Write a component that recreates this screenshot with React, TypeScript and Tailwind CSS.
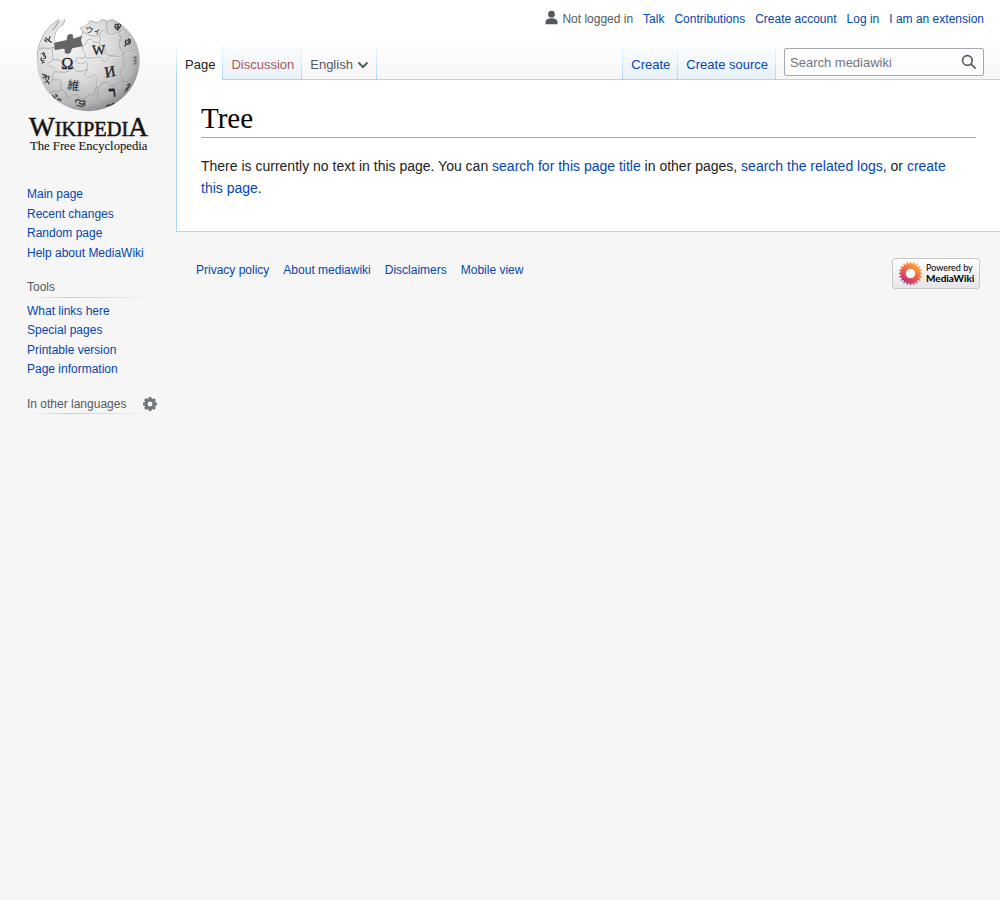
import type { ReactNode } from "react";

function Link({ children, className = "" }: { children: ReactNode; className?: string }) {
  return (
    <a href="#" className={`text-[#0645ad] hover:underline ${className}`}>
      {children}
    </a>
  );
}

function Logo() {
  return (
    <svg viewBox="0 0 408 450" className="block h-[150px] w-[136px]" role="img" aria-label="Wikipedia">
      <defs>
        <radialGradient id="globe" cx="0.36" cy="0.3" r="0.78">
          <stop offset="0" stopColor="#f4f4f4" />
          <stop offset="0.45" stopColor="#dcdcdd" />
          <stop offset="0.78" stopColor="#b4b4b6" />
          <stop offset="1" stopColor="#707073" />
        </radialGradient>
        <clipPath id="ball">
          <path d="M50 150C50 104 70 60 104 36L116 27L122 32L136 27L132 42L118 52L108 66L104 82L110 96L184 76L188 64L178 54L190 50L202 42L212 31L232 38L246 28L264 33L276 28L294 36C336 62 359 104 359 148A154 154 0 0 1 50 150Z" />
        </clipPath>
      </defs>
      <g clipPath="url(#ball)">
        <rect x="45" y="20" width="320" height="290" fill="url(#globe)" />
        <g fill="none" stroke="#fff" strokeOpacity="0.75" strokeWidth="3" transform="translate(2 2)">
          <path d="M188 108C202 108 196 90 208 88S216 103 236 97C248 93 238 82 240 72S256 58 262 68S282 74 300 64S320 84 332 78" />
          <path d="M100 112C92 130 104 136 98 150S84 152 84 164S100 166 104 178S96 196 98 208" />
          <path d="M188 110C184 126 202 132 194 142S172 136 168 148S186 166 194 158S206 170 202 180S190 196 202 202S218 190 226 198S232 218 230 232" />
          <path d="M194 142C210 150 228 140 240 142S248 160 258 156S264 136 280 138S306 142 312 132S332 124 346 132" />
        </g>
        <g fill="none" stroke="#98989a" strokeWidth="2" strokeLinecap="round">
          <path d="M188 108C202 108 196 90 208 88S216 103 236 97C248 93 238 82 240 72S256 58 262 68S282 74 300 64S320 84 332 78" />
          <path d="M184 62C198 70 204 76 220 78S236 74 240 72M262 68C266 54 254 48 260 34M300 64C294 76 308 82 300 92" />
          <path d="M58 116C72 110 86 120 100 112M100 112C92 130 104 136 98 150S84 152 84 164S100 166 104 178S96 196 98 208" />
          <path d="M98 150C112 146 120 150 126 156M104 186C118 184 132 190 144 184S138 166 152 168S160 184 174 184S194 182 202 180" />
          <path d="M188 110C184 126 202 132 194 142S172 136 168 148S186 166 194 158S206 170 202 180S190 196 202 202S218 190 226 198S232 218 230 232" />
          <path d="M194 142C210 150 228 140 240 142S248 160 258 156S264 136 280 138S306 142 312 132S332 124 346 132" />
          <path d="M236 97C242 112 258 108 256 122S268 136 280 138M300 92C292 108 306 118 312 132" />
          <path d="M230 232C248 236 240 216 256 216S264 230 282 226S298 208 310 214S326 206 342 200" />
          <path d="M312 132C302 150 316 154 312 168S296 180 302 194S308 204 310 214" />
          <path d="M66 222C80 214 96 224 98 208M98 208C110 214 116 204 122 214S116 236 126 240S142 252 140 264" />
          <path d="M140 264C154 268 154 250 168 254S176 272 190 266S206 248 216 256S222 240 230 232M190 266C196 280 188 286 192 300" />
          <path d="M126 240C112 248 98 240 86 250M230 232C240 248 228 262 238 272S258 270 264 280M282 226C278 242 292 250 288 264" />
        </g>
        <path
          d="M50 150C50 104 70 60 104 36L116 27M136 27L132 42L118 52L108 66L104 82M116 34L104 54L96 60M184 76L188 64L178 54L190 50L202 42L212 31L232 38L246 28L264 33L276 28L294 36"
          fill="none"
          stroke="#8f8f91"
          strokeWidth="3"
        />
        <g fill="none" stroke="#39393b" strokeWidth="3.6" strokeLinecap="round">
          <path d="M77 84l12 10M90 80l-4 12l8 5M80 95l-6-5" />
          <path d="M66 132c7-7 11 1 4 6c9-3 9 7 2 8M64 143c-4 8 2 11 6 8M73 156l-7 3" />
          <path d="M68 193l11 4M70 204c5-8 12-2 7 3M82 200c6-4 7 5 3 8M76 216l6-4l5 9" />
          <path d="M98 257l7 8M106 254c8 0 7 7 1 7M112 270l7-5M119 272l4-3" />
          <path d="M168 276c-5-7 6-9 12-4s15-4 15 4s-14 8-18 2M171 286c10 5 18 4 24-2" />
          <path d="M259 289l8-5l3 4l8-8M283 280l-4 5" />
          <path d="M287 43c-6 6 0 13 6 17c5-6 12-13 8-17c-4-3-7 0-8 4c-1-4-4-6-6-4zM287 51l14-1M293 44l1 16" />
          <path d="M317 91c-2 9 4 14 10 10s5-13 0-13s-4 8 2 8M316 105l-1 3" strokeWidth="4.5" />
          <path d="M340 143l9-2M340 153l10-4M342 163l8-6M347 140l-2 22" strokeOpacity="0.5" />
          <path d="M323 226c6-8 9-3 5 3M319 236l8-5M315 243l8-5" />
        </g>
        <g fill="#242426" className="font-['Liberation_Serif',serif]" textAnchor="middle">
          <text x="142" y="176" fontSize="49" stroke="#242426" strokeWidth="1">Ω</text>
          <text x="236" y="134" fontSize="42" transform="rotate(-4 236 120)" stroke="#242426">W</text>
          <text x="270" y="200" fontSize="45" transform="rotate(-10 270 186)" stroke="#242426">И</text>
          <text x="277" y="260" fontSize="42" fontWeight="700" transform="rotate(-5 277 247)" stroke="#242426" strokeWidth="2">ר</text>
        </g>
        <g fill="#242426" className="font-['Noto_Sans_CJK_JP',sans-serif]" textAnchor="middle">
          <text x="161" y="240" fontSize="37" transform="rotate(6 161 227)">維</text>
          <text x="220" y="70" fontSize="24" transform="rotate(8 220 61)">ウィ</text>
        </g>
      </g>
      <path
        d="M101 99L137 91C145 88 138 78 145 74C153 70 161 73 159 81C158 86 162 86 167 84L187 77L183 89L188 109L160 114C152 116 156 125 149 130C141 134 132 130 134 122C136 116 130 116 125 117L105 120C101 113 106 107 101 99Z"
        fill="#656568"
      />
      <g fill="#141414" stroke="#141414" className="font-['Liberation_Serif',serif]">
        <text x="27" y="378" fontSize="82" strokeWidth="1.5">
          W<tspan fontSize="61">IKIPEDI</tspan>A
        </text>
        <text x="30" y="420" fontSize="38" strokeWidth="0.3">The Free Encyclopedia</text>
      </g>
    </svg>
  );
}

const petals = Array.from({ length: 20 }, (_, i) => i * 18);

function MediaWikiBadge() {
  return (
    <a
      href="#"
      aria-label="Powered by MediaWiki"
      className="flex h-[31px] w-[88px] shrink-0 items-center gap-[3px] rounded-[3px] border border-[#c8c8c8] bg-linear-to-b from-white to-[#e6e6e6] pl-[5px] text-black"
    >
      <svg viewBox="-13 -13 26 26" className="size-[25px] shrink-0" aria-hidden="true">
        <defs>
          <linearGradient id="sun" gradientUnits="userSpaceOnUse" x1="8" y1="-10" x2="-6" y2="11">
            <stop offset="0" stopColor="#fcb040" />
            <stop offset="0.45" stopColor="#f36c45" />
            <stop offset="0.75" stopColor="#dc3f63" />
            <stop offset="1" stopColor="#84408f" />
          </linearGradient>
          <mask id="petals">
            {petals.map((angle) => (
              <path key={angle} d="M-1.2 -5L-1.9 -9L0 -12.8L1.9 -9L1.2 -5Z" fill="#fff" transform={`rotate(${angle})`} />
            ))}
            <circle r="7" fill="none" stroke="#fff" strokeWidth="3.6" />
          </mask>
        </defs>
        <circle r="7" fill="#fff" />
        <rect x="-13" y="-13" width="26" height="26" fill="url(#sun)" mask="url(#petals)" />
      </svg>
      <span className="font-['Lato',sans-serif] text-[9px] leading-[10px] whitespace-nowrap">
        Powered by
        <br />
        <b className="text-[10px] font-bold">MediaWiki</b>
      </span>
    </a>
  );
}

function TabEdge() {
  return <span className="w-px shrink-0 bg-linear-to-b from-white to-[#a7d7f9]" />;
}

function Tab({ children, tone }: { children: ReactNode; tone: string }) {
  return (
    <li className="flex">
      <a href="#" className={`flex items-center pt-[10px] pr-[7px] pl-2 whitespace-nowrap ${tone}`}>
        {children}
      </a>
      <TabEdge />
    </li>
  );
}

function Heading({ children, action }: { children: ReactNode; action?: ReactNode }) {
  return (
    <div className="mt-[15px] mb-1 flex items-center justify-between">
      <h3 className="font-normal text-[#54595d]">{children}</h3>
      {action}
    </div>
  );
}

function Rule() {
  return (
    <div className="-mt-[5px] mb-1 h-px bg-linear-to-r from-[#c8ccd1]/0 via-[#c8ccd1] via-33% to-[#c8ccd1]/0" />
  );
}

function NavList({ items }: { items: string[] }) {
  return (
    <ul>
      {items.map((item) => (
        <li key={item}>
          <Link>{item}</Link>
        </li>
      ))}
    </ul>
  );
}

export default function App() {
  return (
    <div className="flex min-h-screen bg-[#f6f6f6] bg-[linear-gradient(#fff_40px,#f6f6f6_80px)] font-['Liberation_Sans',sans-serif] text-[#202122]">
      <aside className="w-44 shrink-0 pt-[10px]">
        <a href="#" className="ml-5 block w-[136px]">
          <Logo />
        </a>
        <nav className="mt-[25px] pr-[19px] pl-[27px] text-xs leading-relaxed" aria-label="Site">
          <NavList items={["Main page", "Recent changes", "Random page", "Help about MediaWiki"]} />
          <Heading>Tools</Heading>
          <Rule />
          <NavList items={["What links here", "Special pages", "Printable version", "Page information"]} />
          <Heading
            action={
              <button type="button" aria-label="Language settings" className="text-[#72777d]">
                <svg viewBox="0 0 20 20" className="block size-[14px]" fill="currentColor">
                  <g transform="translate(10 10)">
                    {[0, 45, 90, 135].map((a) => (
                      <path key={a} transform={`rotate(${a})`} d="M-2-10h4l.8 4v12l-.8 4h-4l-.8-4v-3h0v-6z" clipPath="url(#gear-teeth)" />
                    ))}
                    <clipPath id="gear-teeth">
                      <path d="M-4-11h8v6h-8zM-4 5h8v6h-8z" />
                    </clipPath>
                  </g>
                  <path
                    fillRule="evenodd"
                    d="M10 2.200a7.800 7.800 0 0 0 0 15.600 7.800 7.800 0 0 0 0-15.600zM10 6.500a3.500 3.500 0 0 1 0 7 3.500 3.500 0 0 1 0-7z"
                  />
                </svg>
              </button>
            }
          >
            In other languages
          </Heading>
          <Rule />
        </nav>
      </aside>

      <div className="min-w-0 flex-1">
        <header>
          <nav aria-label="Personal tools" className="flex h-10 justify-end pr-4 text-xs">
            <ul className="flex h-[38px] items-center gap-[10px] whitespace-nowrap">
              <li className="flex items-center gap-[3px] text-[#54595d]">
                <svg viewBox="0 0 20 20" className="mb-1 size-[15px]" fill="currentColor" aria-hidden="true">
                  <path d="M10 11c-5.920 0-8 3-8 5v3h16v-3c0-2-2.080-5-8-5z" />
                  <circle cx="10" cy="5.500" r="4.500" />
                </svg>
                Not logged in
              </li>
              {["Talk", "Contributions", "Create account", "Log in", "I am an extension"].map((item) => (
                <li key={item}>
                  <Link>{item}</Link>
                </li>
              ))}
            </ul>
          </nav>
          <div className="flex h-10 justify-between border-b border-[#a7d7f9] text-[13px]">
            <nav aria-label="Namespaces" className="flex">
              <TabEdge />
              <ul className="flex">
                <li className="-mb-px flex">
                  <a href="#" aria-current="page" className="flex items-center bg-white pt-[10px] pr-[7px] pb-px pl-2">
                    Page
                  </a>
                  <TabEdge />
                </li>
                <Tab tone="bg-linear-to-b from-white to-[#e8f2f8] text-[#a55858]">Discussion</Tab>
                <Tab tone="gap-1 text-[#54595d]">
                  English
                  <svg viewBox="0 0 12 8" className="h-2 w-3" fill="none" stroke="currentColor" strokeWidth="2" aria-hidden="true">
                    <path d="M1.500 1.500L6 6L10.500 1.500" />
                  </svg>
                </Tab>
              </ul>
            </nav>
            <div className="flex pr-4">
              <nav aria-label="Views" className="flex">
                <TabEdge />
                <ul className="flex">
                  <Tab tone="bg-linear-to-b from-white to-[#e8f2f8] text-[#0645ad]">Create</Tab>
                  <Tab tone="bg-linear-to-b from-white to-[#e8f2f8] text-[#0645ad]">Create source</Tab>
                </ul>
              </nav>
              <form className="mt-2 ml-2 flex h-7 w-[200px] rounded-[2px] border border-[#a2a9b1] bg-white/50" onSubmit={(e) => e.preventDefault()}>
                <input
                  type="search"
                  aria-label="Search mediawiki"
                  placeholder="Search mediawiki"
                  className="min-w-0 flex-1 bg-transparent pt-px pl-[5px] text-[13px] outline-none placeholder:text-[#72777d]"
                />
                <button type="submit" aria-label="Search" className="flex w-7 items-center justify-center text-[#54595d]">
                  <svg viewBox="0 0 20 20" className="size-4" fill="currentColor">
                    <path fillRule="evenodd" d="M12.200 13.600a7 7 0 1 1 1.400-1.400l5.400 5.400-1.400 1.400zM3 8a5 5 0 1 0 10 0A5 5 0 0 0 3 8" />
                  </svg>
                </button>
              </form>
            </div>
          </div>
        </header>

        <main className="border-b border-l border-[#a7d7f9] bg-white px-6 pt-5 pb-8">
          <h1 className="border-b border-[#a2a9b1] font-['Liberation_Serif',serif] text-[29px] leading-[37px] text-black">
            Tree
          </h1>
          <p className="mt-[17px] pr-3 text-sm leading-[22px]">
            There is currently no text in this page. You can <Link>search for this page title</Link> in other pages,{" "}
            <Link>search the related logs</Link>, or <Link>create this page</Link>.
          </p>
        </main>

        <footer className="flex items-start justify-between px-5 pt-[26px]">
          <ul className="flex flex-wrap gap-x-[14px] pt-1 text-xs">
            {["Privacy policy", "About mediawiki", "Disclaimers", "Mobile view"].map((item) => (
              <li key={item}>
                <Link>{item}</Link>
              </li>
            ))}
          </ul>
          <MediaWikiBadge />
        </footer>
      </div>
    </div>
  );
}
